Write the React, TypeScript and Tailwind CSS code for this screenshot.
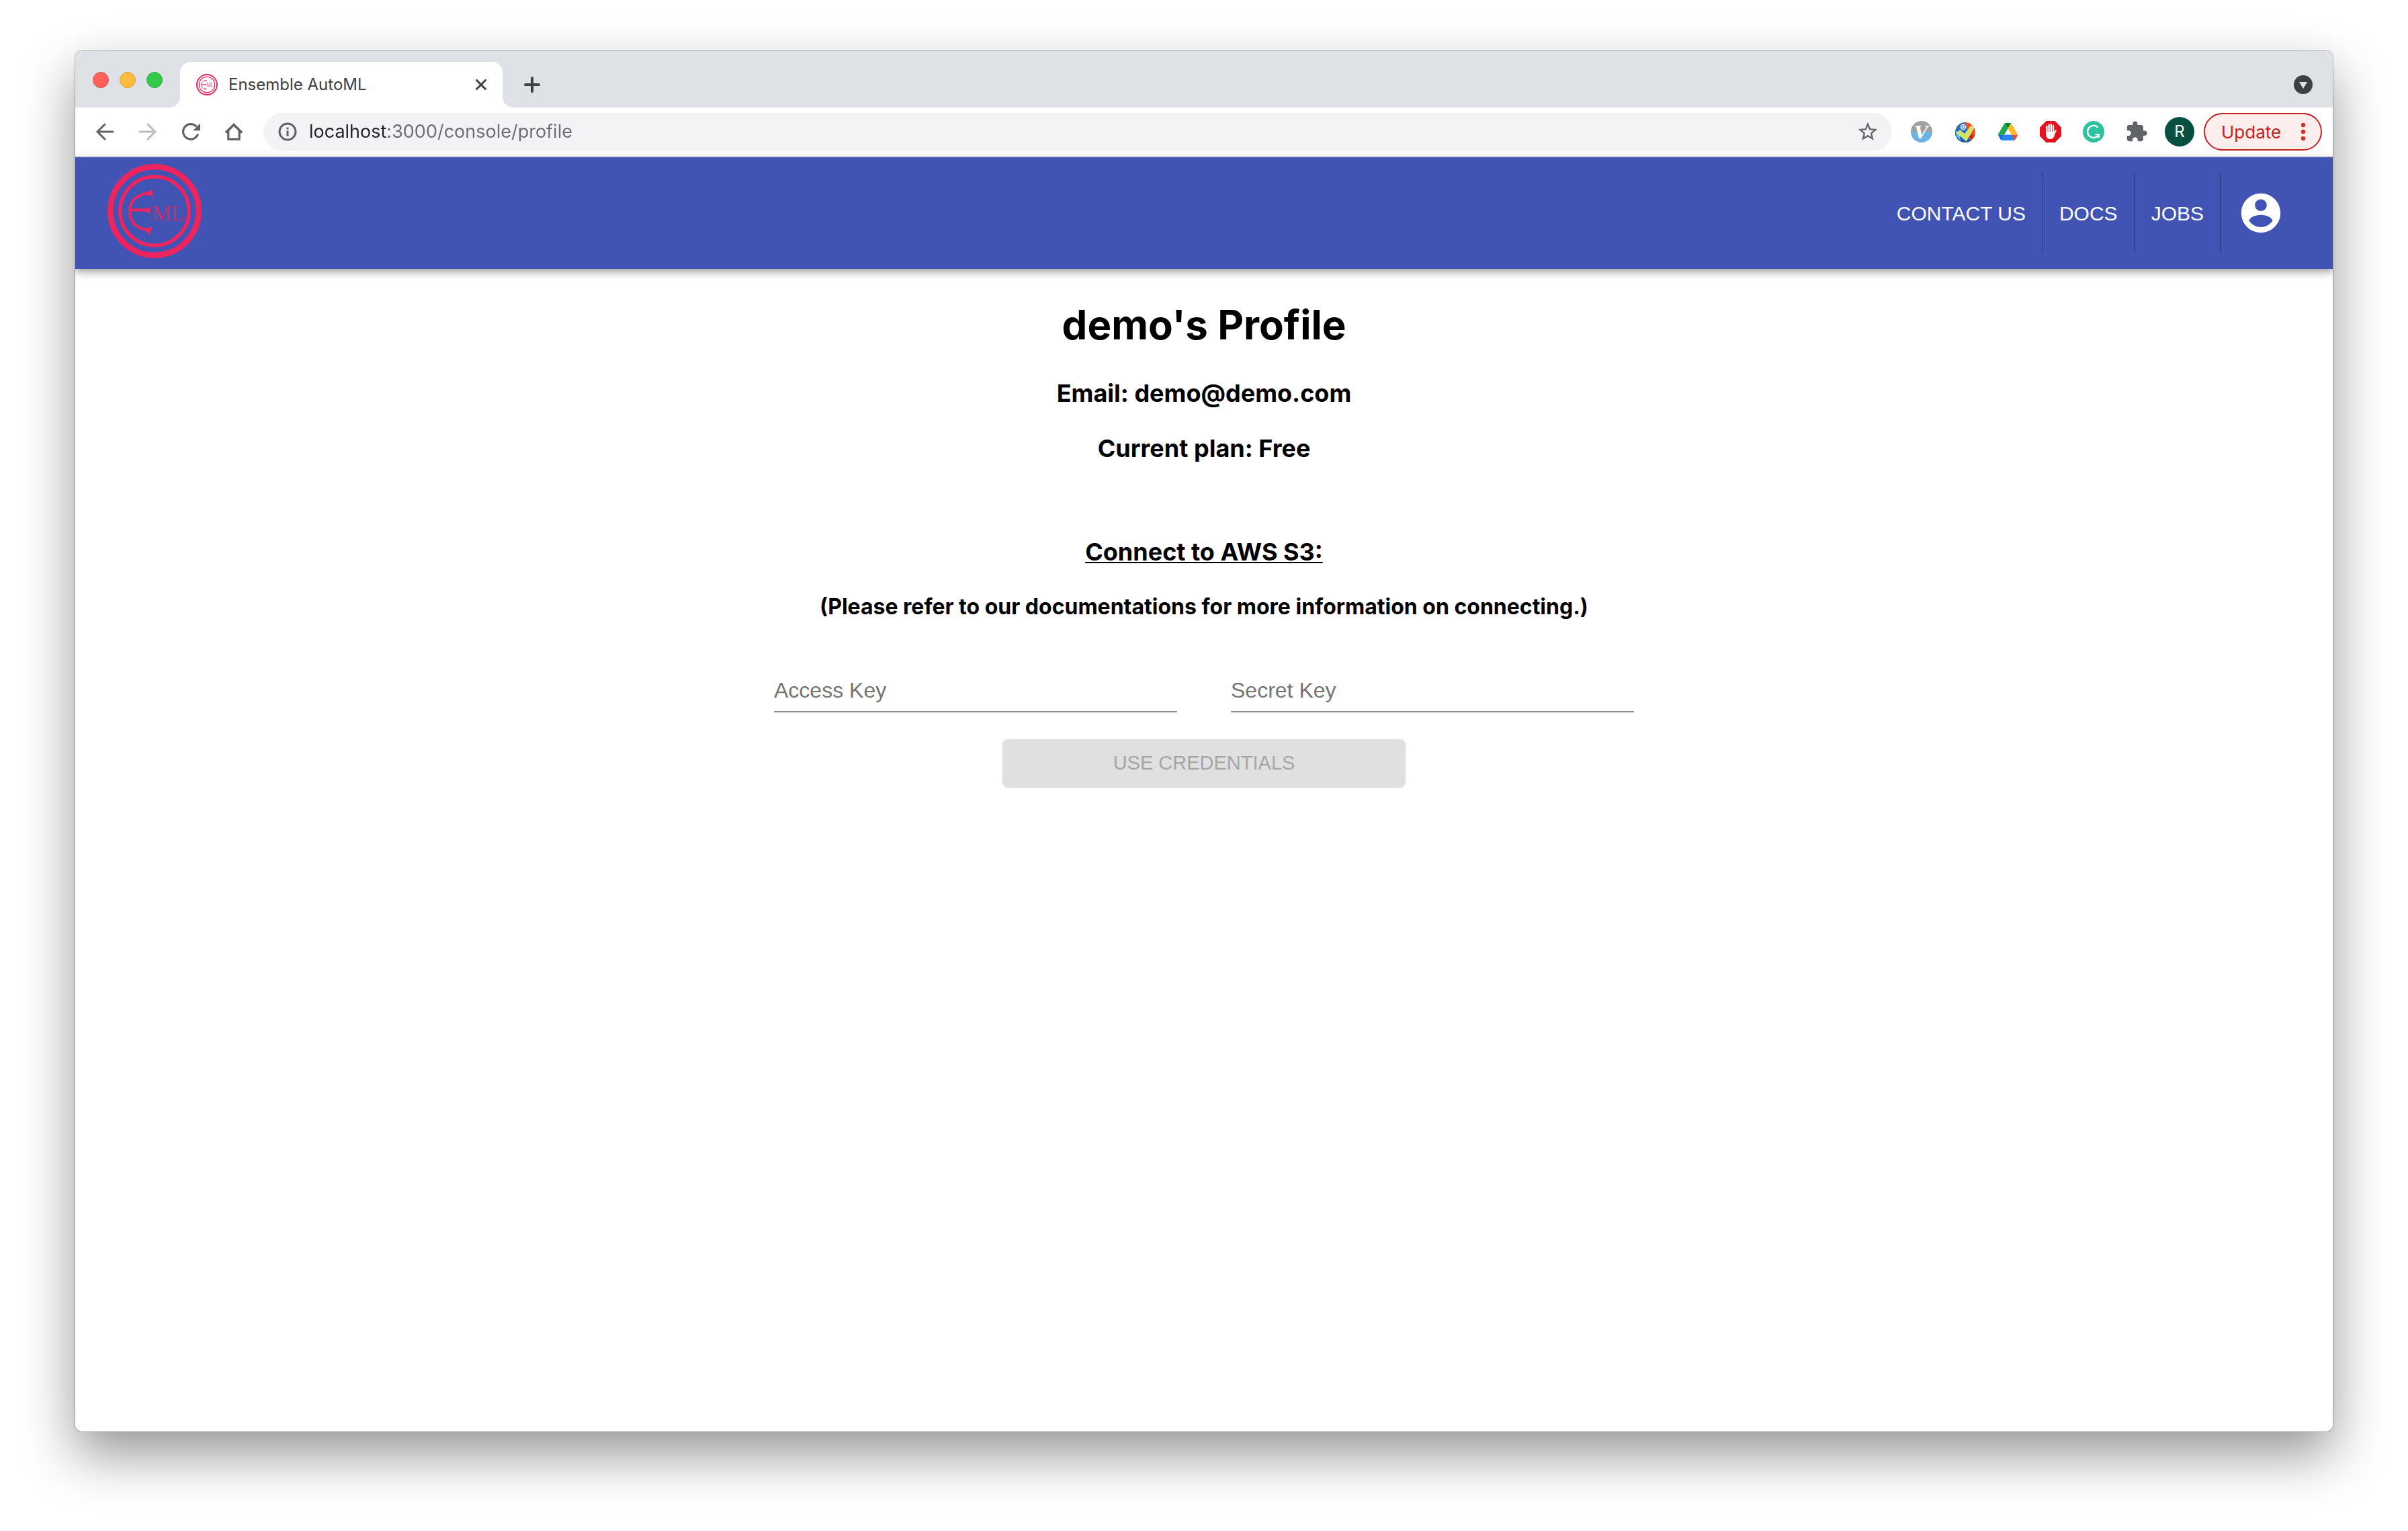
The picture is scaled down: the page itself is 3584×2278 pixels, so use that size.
import type { ReactNode } from 'react';
import { MdStarBorder, MdExtension } from 'react-icons/md';

function BrandLogo({ className }: { className: string }) {
  return (
    <svg viewBox="0 0 140 140" className={className} role="img" aria-label="Ensemble AutoML logo">
      <g fill="none" stroke="#ee245f">
        <circle cx="70" cy="70" r="65.7" strokeWidth="8.6" />
        <circle cx="70" cy="70" r="51.2" strokeWidth="5.4" />
        <path d="M61 43.500C45 45 33 54 33 70C33 88 46 97.500 60 97.500" strokeWidth="4" />
        <path d="M33 68.500H60" strokeWidth="4.200" />
      </g>
      <g fill="#ee245f">
        <path d="M56 41.800C61 41.500 64 40 65.500 37C67 40 67.500 45 67 49C64 46.500 60 45.500 56 46.500Z" />
        <path d="M54 66.500C59 67 62 66 64.500 63C64 67 63.500 72 62.500 75.500C60 71 58 70.500 54 70.800Z" />
        <path d="M53 95C59 97 62 95 66.500 92C66 96 64 102 63 105.500C60 101 57 99.500 53 99.500Z" />
        <text x="67" y="83.500" fontSize="32" opacity="0.85" fontFamily="'Liberation Serif', serif">ML</text>
      </g>
    </svg>
  );
}

function ToolButton({ label, children }: { label: string; children: ReactNode }) {
  return (
    <button type="button" aria-label={label} className="flex h-14 w-16 shrink-0 items-center justify-center text-[#5f6368]">
      {children}
    </button>
  );
}

function TabStrip() {
  return (
    <div className="flex h-[84px] bg-white">
      <div className="flex w-[156px] shrink-0 items-center gap-4 rounded-br-2xl bg-[#dee1e6] pt-0.5 pl-[26px]">
        <button type="button" aria-label="Close window" className="size-6 rounded-full border border-[#e2504c] bg-[#fe605c]" />
        <button type="button" aria-label="Minimize window" className="size-6 rounded-full border border-[#e0a033] bg-[#ffbd40]" />
        <button type="button" aria-label="Zoom window" className="size-6 rounded-full border border-[#24b33a] bg-[#34cb4b]" />
      </div>
      <div className="w-[480px] shrink-0 bg-[#dee1e6] pt-4">
        <div className="flex h-full items-center rounded-t-2xl bg-white px-6">
          <BrandLogo className="size-8 shrink-0" />
          <span className="ml-4 flex-1 text-2xl text-[#3c4043]">Ensemble AutoML</span>
          <button type="button" aria-label="Close tab">
            <svg viewBox="0 0 16 16" className="size-4" fill="none" stroke="#3c4043" strokeWidth="3" strokeLinecap="round">
              <path d="M1.500 1.500L14.500 14.500M14.500 1.500L1.500 14.500" />
            </svg>
          </button>
        </div>
      </div>
      <div className="flex flex-1 items-center justify-between rounded-bl-2xl bg-[#dee1e6] pt-4 pr-[30px] pl-8">
        <button type="button" aria-label="New tab">
          <svg viewBox="0 0 24 24" className="size-6" fill="none" stroke="#3c4043" strokeWidth="4" strokeLinecap="round">
            <path d="M2 12H22M12 2V22" />
          </svg>
        </button>
        <button type="button" aria-label="Search tabs">
          <svg viewBox="0 0 28 28" className="size-7">
            <circle cx="14" cy="14" r="14" fill="#3c4043" />
            <path d="M8 10H20L14 20Z" fill="#dee1e6" />
          </svg>
        </button>
      </div>
    </div>
  );
}

function Toolbar() {
  return (
    <div className="flex h-[74px] items-center border-b-2 border-[#dadce0] bg-white pr-4 pl-3">
      <ToolButton label="Back">
        <svg viewBox="0 0 32 32" className="size-8" fill="none" stroke="currentColor" strokeWidth="3" strokeLinecap="round">
          <path d="M28 16H5.500M16 5L5 16L16 27" />
        </svg>
      </ToolButton>
      <ToolButton label="Forward">
        <svg viewBox="0 0 32 32" className="size-8 text-[#babcbe]" fill="none" stroke="currentColor" strokeWidth="3" strokeLinecap="round">
          <path d="M4 16H26.500M16 5L27 16L16 27" />
        </svg>
      </ToolButton>
      <ToolButton label="Reload">
        <svg viewBox="0 0 32 32" className="size-8" fill="none" stroke="currentColor" strokeWidth="3.2">
          <path d="M26.600 19.500A11.300 11.300 0 1 1 24.500 8.500" />
          <path d="M30 3.500V14.200H19.300Z" fill="currentColor" stroke="none" />
        </svg>
      </ToolButton>
      <ToolButton label="Home">
        <svg viewBox="0 0 32 32" className="size-8" fill="none" stroke="currentColor" strokeWidth="3.200">
          <path d="M4 17.500L16 5.500L28 17.500" strokeWidth="3.600" />
          <path d="M7.800 15V27.200H24.200V15" strokeLinejoin="round" />
        </svg>
      </ToolButton>

      <div className="ml-3 flex h-14 flex-1 items-center rounded-full bg-[#f1f3f4] pr-[19px] pl-[22px]">
        <button type="button" aria-label="View site information">
          <svg viewBox="0 0 28 28" className="size-7">
            <circle cx="14" cy="14" r="12" fill="none" stroke="#5f6368" strokeWidth="3" />
            <path d="M12.500 7.500h3v3h-3zM12.500 12.500h3v8h-3z" fill="#5f6368" />
          </svg>
        </button>
        <input
          type="text"
          aria-label="Address"
          defaultValue="localhost:3000/console/profile"
          className="ml-[18px] h-10 flex-1 bg-linear-to-r from-[#202124] from-[118px] to-[#6a6c6f] to-[118px] bg-clip-text text-[27px] text-[#5f6368] outline-none [-webkit-text-fill-color:transparent]"
        />
        <button type="button" aria-label="Bookmark this tab" className="text-[#5f6368]">
          <MdStarBorder className="size-[34px]" />
        </button>
      </div>

      <div className="ml-3 flex items-center">
        <ToolButton label="Vimium">
          <svg viewBox="0 0 32 32" className="size-8">
            <path d="M0 16A16 16 0 0 1 32 16Z" fill="#a0a0a0" />
            <path d="M0 16A16 16 0 0 0 32 16Z" fill="#6bb1e2" />
            <text x="15" y="26" textAnchor="middle" fontSize="26" fontWeight="700" fontStyle="italic" fontFamily="'DejaVu Serif', serif" fill="#fff">V</text>
          </svg>
        </ToolButton>
        <ToolButton label="Checker">
          <svg viewBox="0 0 32 32" className="size-8">
            <circle cx="17" cy="17" r="15" fill="#e8561f" />
            <path d="M17 2A15 15 0 0 0 9 29.700L20 14Z" fill="#2f6fb5" />
            <path d="M2 17A15 15 0 0 0 26 29L16 20Z" fill="#1e5fa8" />
            <path d="M2 14L5 24L10 29L8 18Z" fill="#62c3ea" />
            <path d="M22 24L30 19L27 27Z" fill="#b3261e" />
            <circle cx="14" cy="9" r="3.600" fill="none" stroke="#d9ecff" strokeWidth="1.600" />
            <path d="M14 6.500V11.500M11.500 9H16.500" stroke="#d9ecff" strokeWidth="1.300" />
            <path d="M4 17.500L9.500 14L16 20L26 7L30 9.500L18.500 29.500Z" fill="#cfe65c" stroke="#eef6bd" strokeWidth="1" />
          </svg>
        </ToolButton>
        <ToolButton label="Google Drive">
          <svg viewBox="0 0 87.300 78" className="w-[29px]">
            <path fill="#1c6ce0" d="M6.600 66.850l3.850 6.650c.8 1.400 1.950 2.500 3.300 3.300L27.500 53H0c0 1.550.4 3.100 1.200 4.500z" />
            <path fill="#1ea64b" d="M43.650 25L29.900 1.200c-1.350.8-2.500 1.900-3.300 3.300l-25.400 44A9.060 9.060 0 0 0 0 53h27.500z" />
            <path fill="#ea4335" d="M73.550 76.800c1.350-.8 2.500-1.900 3.300-3.300l1.600-2.750 7.650-13.250c.8-1.400 1.200-2.950 1.200-4.500H59.800l5.850 11.500z" />
            <path fill="#11802f" d="M43.650 25L57.400 1.200C56.050.4 54.500 0 52.900 0H34.400c-1.600 0-3.150.45-4.500 1.200z" />
            <path fill="#2684fc" d="M59.800 53H27.500L13.750 76.800c1.350.8 2.900 1.200 4.500 1.200h50.800c1.600 0 3.150-.45 4.500-1.200z" />
            <path fill="#ffba2c" d="M73.400 26.500l-12.700-22c-.8-1.400-1.950-2.500-3.300-3.300L43.650 25l16.150 28h27.450c0-1.550-.4-3.100-1.200-4.500z" />
          </svg>
        </ToolButton>
        <ToolButton label="Ad blocker">
          <svg viewBox="0 0 32 32" className="size-8">
            <path d="M9.500 0H22.500L32 9.500V22.500L22.500 32H9.500L0 22.500V9.500Z" fill="#e3121c" />
            <g stroke="#fff" strokeWidth="2.400" strokeLinecap="round">
              <path d="M10.400 8V18M13.600 6V17M16.800 5.200V17M20 7V18M23.600 14.500L20 21" />
            </g>
            <path d="M9.200 16H21.200L22.500 18C21.800 24 19.500 27 15.500 27C11.500 27 9.200 24 9.200 19Z" fill="#fff" />
          </svg>
        </ToolButton>
        <ToolButton label="Grammarly">
          <svg viewBox="0 0 32 32" className="size-8">
            <circle cx="16" cy="16" r="16" fill="#2bc29d" />
            <path d="M22.500 9.600A9 9 0 1 0 23 21.500" fill="none" stroke="#fff" strokeWidth="2.400" />
            <path d="M18.500 20H23.800V25" fill="none" stroke="#fff" strokeWidth="2.200" />
          </svg>
        </ToolButton>
        <ToolButton label="Extensions">
          <MdExtension className="size-[34px]" />
        </ToolButton>
        <ToolButton label="Profile R">
          <span className="flex size-11 items-center justify-center rounded-full bg-[#074f40] text-2xl text-white">R</span>
        </ToolButton>
      </div>

      <button type="button" className="ml-1 flex h-14 w-44 items-center justify-between rounded-full border-2 border-[#c5221f] bg-[#fceeed] pr-[22px] pl-6 text-[26px] text-[#c5221f]">
        Update
        <svg viewBox="0 0 8 28" className="h-7 w-2" fill="#d93025" aria-hidden="true">
          <circle cx="4" cy="4" r="3.200" />
          <circle cx="4" cy="14" r="3.200" />
          <circle cx="4" cy="24" r="3.200" />
        </svg>
      </button>
    </div>
  );
}

function NavLink({ children }: { children: ReactNode }) {
  return (
    <a href="#" className="flex h-[118px] items-center border-r-2 border-[#34448f] px-6 text-[30px] text-white">
      {children}
    </a>
  );
}

function AppHeader() {
  return (
    <header className="relative flex h-[166px] items-center justify-between bg-[#4154b3] px-12 font-['Liberation_Sans',Arial,sans-serif] shadow-[0_4px_8px_-2px_rgba(0,0,0,0.2),0_8px_10px_0_rgba(0,0,0,0.14),0_2px_20px_0_rgba(0,0,0,0.12)]">
      <a href="#" className="-mt-1.5">
        <BrandLogo className="size-[140px]" />
      </a>
      <nav className="flex items-center">
        <NavLink>CONTACT US</NavLink>
        <NavLink>DOCS</NavLink>
        <NavLink>JOBS</NavLink>
        <button type="button" aria-label="Account" className="p-6">
          <svg viewBox="0 0 24 24" className="size-[70px]" fill="#fff">
            <path d="M12 2C6.480 2 2 6.480 2 12s4.480 10 10 10 10-4.480 10-10S17.520 2 12 2zm0 3c1.660 0 3 1.340 3 3s-1.340 3-3 3-3-1.340-3-3 1.340-3 3-3zm0 14.200c-2.500 0-4.710-1.280-6-3.220.03-1.990 4-3.080 6-3.080 1.990 0 5.970 1.090 6 3.080-1.290 1.940-3.500 3.220-6 3.220z" />
          </svg>
        </button>
      </nav>
    </header>
  );
}

function KeyField({ label }: { label: string }) {
  return (
    <input
      type="text"
      aria-label={label}
      placeholder={label}
      className="h-16 w-[600px] border-b-2 border-[#8f8f8f] bg-transparent text-[32px] leading-[38px] text-black outline-none placeholder:text-[#757575]"
    />
  );
}

function ProfilePage() {
  return (
    <main className="flex flex-1 flex-col items-center bg-white pt-[47px] text-center font-bold text-black">
      <h1 className="text-[60px] leading-[72px]">demo's Profile</h1>
      <h3 className="mt-11 text-[36px] leading-[44px]">Email: demo@demo.com</h3>
      <h3 className="mt-[38px] text-[36px] leading-[44px]">Current plan: Free</h3>
      <h3 className="mt-[110px] text-[36px] leading-[44px] underline decoration-2 underline-offset-2">Connect to AWS S3:</h3>
      <h4 className="mt-10 text-[32px] leading-[40px]">(Please refer to our documentations for more information on connecting.)</h4>
      <form className="mt-[73px] flex flex-col items-center gap-10 font-['Liberation_Sans',Arial,sans-serif] font-normal">
        <div className="flex gap-20">
          <KeyField label="Access Key" />
          <KeyField label="Secret Key" />
        </div>
        <button type="submit" disabled className="h-[72px] w-[600px] rounded-lg bg-[#e0e0e0] text-[29px] text-[#a6a6a6]">
          USE CREDENTIALS
        </button>
      </form>
    </main>
  );
}

export default function App() {
  return (
    <div className="flex min-h-screen flex-col bg-white px-28 pt-[76px] pb-[148px] font-[Inter,sans-serif]">
      <div className="flex flex-1 flex-col rounded-[10px] shadow-[0_0_0_1px_rgba(0,0,0,0.25),0_34px_80px_0_rgba(0,0,0,0.42)]">
        <div className="flex flex-1 flex-col overflow-hidden rounded-[10px]">
          <TabStrip />
          <Toolbar />
          <AppHeader />
          <ProfilePage />
        </div>
      </div>
    </div>
  );
}
